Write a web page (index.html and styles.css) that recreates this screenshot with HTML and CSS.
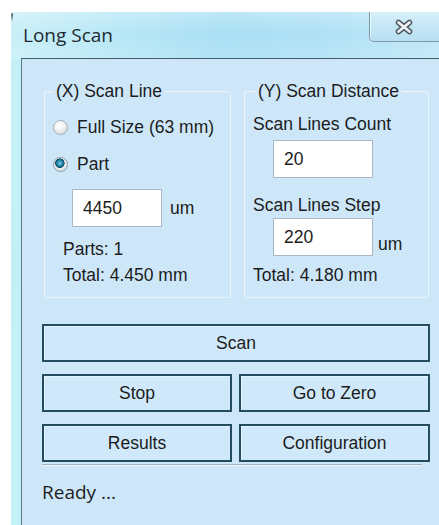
FILE: index.html
```html
<!DOCTYPE html>
<html lang="en">
<head>
<meta charset="utf-8">
<title>Long Scan</title>
<link rel="stylesheet" href="styles.css">
</head>
<body>
<div class="window">
  <div class="titlebar">
    <span class="title">Long Scan</span>
    <button class="close" type="button" aria-label="Close">
      <svg width="20" height="16" viewBox="0 0 20 16" aria-hidden="true">
        <path d="M4.5 3.5 L15.5 12.5 M15.5 3.5 L4.5 12.5" stroke="#4b5661" stroke-width="5.6" stroke-linecap="round" fill="none"/>
        <path d="M4.5 3.5 L15.5 12.5 M15.5 3.5 L4.5 12.5" stroke="#eef2f5" stroke-width="2.8" stroke-linecap="round" fill="none"/>
      </svg>
    </button>
  </div>

  <div class="panel">
    <div class="groups">
      <fieldset class="group group-x">
        <legend>(X) Scan Line</legend>
        <label class="radio-row first"><input type="radio" name="mode" class="radio"><span>Full Size (63 mm)</span></label>
        <label class="radio-row"><input type="radio" name="mode" class="radio" checked><span>Part</span></label>
        <div class="field-row part-row"><input class="box box-part" type="text" value="4450"><span class="unit">um</span></div>
        <div class="line parts">Parts: 1</div>
        <div class="line total">Total: 4.450 mm</div>
      </fieldset>

      <fieldset class="group group-y">
        <legend>(Y) Scan Distance</legend>
        <div class="line label-count">Scan Lines Count</div>
        <div class="field-row count-row"><input class="box" type="text" value="20"></div>
        <div class="line label-step">Scan Lines Step</div>
        <div class="field-row step-row"><input class="box" type="text" value="220"><span class="unit">um</span></div>
        <div class="line total">Total: 4.180 mm</div>
      </fieldset>
    </div>

    <div class="actions">
      <button class="btn wide" type="button">Scan</button>
      <button class="btn" type="button">Stop</button>
      <button class="btn" type="button">Go to Zero</button>
      <button class="btn" type="button">Results</button>
      <button class="btn" type="button">Configuration</button>
    </div>

    <div class="separator"></div>
    <div class="status">Ready ...</div>
  </div>
</div>
</body>
</html>
```

FILE: styles.css
```css
html, body {
  margin: 0;
  padding: 0;
  background: #ffffff;
  overflow: hidden;
}

body {
  width: 439px;
  height: 525px;
  font-family: "Liberation Sans", Arial, sans-serif;
  font-size: 17.5px;
  color: #1c1c1c;
}

/* window frame */
.window {
  position: relative;
  margin: 12px 0 0 11px;
  height: 513px;
  display: flex;
  flex-direction: column;
  background: linear-gradient(180deg, #c4eff6 0%, #c2f1f7 100%);
  border-top-left-radius: 5px;
}

.window::before {
  content: "";
  position: absolute;
  left: 0;
  top: 1px;
  width: 2px;
  height: 9px;
  background: linear-gradient(180deg, #3d4d55, rgba(61, 77, 85, 0));
  border-top-left-radius: 2px;
}

.titlebar {
  height: 46px;
  display: flex;
  align-items: flex-start;
  background:
    linear-gradient(180deg, rgba(255, 255, 255, 0.25) 0%, rgba(255, 255, 255, 0) 45%, rgba(255, 255, 255, 0.12) 100%),
    linear-gradient(90deg, #c9eff8 0%, #b7e7f6 25%, #a9dff5 50%, #afe1f6 72%, #bfe7f7 100%);
  border-top-left-radius: 5px;
}

.title {
  align-self: center;
  padding-left: 12px;
  font-family: "Open Sans", "Noto Sans", sans-serif;
  font-size: 19px;
  color: #1d2a30;
}

.close {
  margin-left: auto;
  margin-right: -4px;
  width: 74px;
  height: 30px;
  padding: 0 4px 0 0;
  display: flex;
  align-items: center;
  justify-content: center;
  border: 1px solid #7f98a7;
  border-top: none;
  border-radius: 0 0 0 5px;
  background: linear-gradient(180deg, #d6f0f9 0%, #c3e6f5 55%, #b6dff2 100%);
  box-shadow: inset 1px 0 0 rgba(255, 255, 255, 0.6);
}

/* client area */
.panel {
  flex: 1;
  margin-left: 10px;
  padding: 22px 0 0 20px;
  background: #cde7f9;
  border-top: 1px solid #3f5d6b;
  border-left: 1px solid #5b7b88;
}

.groups {
  display: flex;
  gap: 13px;
  margin-left: 2px;
}

.group {
  margin: 0;
  padding: 0 0 11px 8px;
  border: 1px solid #eaf4fb;
  border-radius: 3px;
  box-shadow: inset 1px 1px 0 #d8e8f3;
}

.group-x { width: 177px; }
.group-y { width: 175px; }

.group legend {
  padding: 0 3px;
  line-height: 20px;
}

.group-y legend { margin-left: 2px; }

.line {
  height: 22px;
  line-height: 22px;
  white-space: nowrap;
}

/* left group */
.radio-row {
  display: flex;
  align-items: center;
  gap: 9px;
  height: 24px;
  margin-top: 13px;
  white-space: nowrap;
}

.radio-row.first { margin-top: 14px; }

.radio {
  appearance: none;
  -webkit-appearance: none;
  margin: 0;
  width: 15px;
  height: 15px;
  border-radius: 50%;
  border: 1px solid #a3aeb5;
  background: radial-gradient(circle at 40% 35%, #ffffff 0%, #eef0f2 45%, #c9ced3 100%);
  flex: none;
}

.radio:checked {
  border-color: #8b98a1;
  background:
    radial-gradient(circle at 45% 40%, #7fd0ea 0px, #2a8db4 2.5px, #0d4c69 4.5px, rgba(13, 76, 105, 0) 5px),
    radial-gradient(circle at 40% 35%, #ffffff 0%, #eceff1 50%, #c8cdd2 100%);
}

.field-row {
  display: flex;
  align-items: center;
}

.part-row {
  margin-top: 13px;
  margin-left: 19px;
}

.box {
  box-sizing: border-box;
  width: 100px;
  height: 38px;
  margin: 0;
  padding: 0 0 0 10px;
  border: 1px solid #a9b8c2;
  background: #ffffff;
  font-family: "Liberation Sans", Arial, sans-serif;
  font-size: 17.5px;
  color: #1c1c1c;
}

.box-part { width: 90px; }

.unit { margin-left: 8px; }
.step-row .unit { margin-left: 5px; margin-top: 14px; }

.parts { margin-top: 11px; margin-left: 10px; }
.group-x .total { margin-top: 4px; margin-left: 10px; }

/* right group */
.label-count { margin-top: 12px; }
.count-row { margin-top: 5px; margin-left: 20px; }
.label-step { margin-top: 16px; }
.step-row { margin-top: 2px; margin-left: 20px; }
.group-y .total { margin-top: 8px; }

/* command buttons */
.actions {
  width: 388px;
  margin-top: 26px;
  display: grid;
  grid-template-columns: 190px 191px;
  grid-auto-rows: 38px;
  column-gap: 7px;
  row-gap: 12px;
}

.btn {
  margin: 0;
  padding: 0;
  border: 2px solid #234c60;
  background: #d0e9fa;
  box-shadow: inset 1px 1px 0 #e4f3fc;
  font-family: "Liberation Sans", Arial, sans-serif;
  font-size: 17.5px;
  color: #1c1c1c;
}

.btn.wide { grid-column: 1 / -1; }

.separator {
  width: 380px;
  margin-top: 2px;
  border-top: 1px solid #9eb0bb;
  border-bottom: 1px solid #eef7fc;
}

.status {
  margin-top: 13px;
  font-family: "Open Sans", "Noto Sans", sans-serif;
  font-size: 19px;
  line-height: 26px;
  color: #1d1d1d;
}
```
